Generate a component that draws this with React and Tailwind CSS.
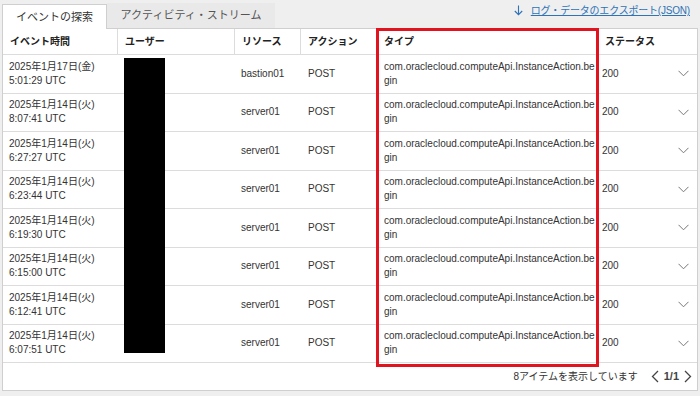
import React from "react";

const rows = [
  ["2025年1月17日(金)", "5:01:29 UTC", "bastion01"],
  ["2025年1月14日(火)", "8:07:41 UTC", "server01"],
  ["2025年1月14日(火)", "6:27:27 UTC", "server01"],
  ["2025年1月14日(火)", "6:23:44 UTC", "server01"],
  ["2025年1月14日(火)", "6:19:30 UTC", "server01"],
  ["2025年1月14日(火)", "6:15:00 UTC", "server01"],
  ["2025年1月14日(火)", "6:12:41 UTC", "server01"],
  ["2025年1月14日(火)", "6:07:51 UTC", "server01"],
];

const cols = "grid grid-cols-[115px_117px_66px_76px_221px_1fr]";

function Chevron() {
  return (
    <svg width="11" height="7" viewBox="0 0 11 7" fill="none" stroke="#777" strokeWidth="1">
      <path d="M0.5 0.8 L5.5 5.8 L10.5 0.8" />
    </svg>
  );
}

export default function App() {
  return (
    <div
      className="w-[700px] h-[396px] bg-[#efefef] overflow-hidden text-[#333] relative"
      style={{ fontFamily: '"Liberation Sans", "Noto Sans CJK JP", sans-serif' }}
    >
      <div className="flex items-end h-[28px] pl-[2px] pr-[10px]">
        <div className="h-[25px] w-[105px] bg-white border border-b-0 border-[#cfcfcf] flex items-center justify-center text-[11px] text-[#333] relative top-px">
          イベントの探索
        </div>
        <div className="h-[25px] w-[168px] bg-[#e9e9e9] flex items-center justify-center text-[11px] text-[#555]">
          アクティビティ・ストリーム
        </div>
        <div className="ml-auto self-start mt-[3px] flex items-center gap-[8px] text-[10px] text-[#2d73b6] underline">
          <svg width="9" height="11" viewBox="0 0 9 11" fill="none" stroke="#2d73b6" strokeWidth="1.1">
            <path d="M4.5 0.5 V9.5 M0.8 6 L4.5 9.7 L8.2 6" />
          </svg>
          <span className="tracking-[-0.2px]">ログ・データのエクスポート(JSON)</span>
        </div>
      </div>

      <div className="mx-[2px] bg-white border border-[#cfcfcf] h-[363px] text-[10px]">
        <div className={`${cols} h-[26px] border-b border-[#dcdcdc] font-bold text-[10px] text-[#222]`}>
          {["イベント時間", "ユーザー", "リソース", "アクション", "タイプ", "ステータス"].map((h, i) => (
            <div
              key={h}
              className={`flex items-center pl-[7px] ${i < 5 ? "border-r border-[#dcdcdc]" : ""}`}
            >
              {h}
            </div>
          ))}
        </div>
        {rows.map((r, i) => (
          <div key={i} className={`${cols} h-[38.5px] border-b border-[#dcdcdc] leading-[14px]`}>
            <div className="flex flex-col justify-center pl-[6px]">
              <span>{r[0]}</span>
              <span>{r[1]}</span>
            </div>
            <div />
            <div className="flex items-center pl-[6px]">{r[2]}</div>
            <div className="flex items-center pl-[7px]">POST</div>
            <div className="flex items-center pl-[7px] pr-[2px] break-all">
              com.oraclecloud.computeApi.InstanceAction.begin
            </div>
            <div className="flex items-center justify-between pl-[4px] pr-[8px]">
              <span>200</span>
              <Chevron />
            </div>
          </div>
        ))}
        <div className="flex items-center justify-end h-[26px] pr-[5px] gap-[13px] text-[10px]">
          <span>8アイテムを表示しています</span>
          <div className="flex items-center gap-[5px] text-[#333]">
            <svg width="8" height="13" viewBox="0 0 8 13" fill="none" stroke="#444" strokeWidth="1.3">
              <path d="M7 1 L1.5 6.5 L7 12" />
            </svg>
            <span className="text-[11px] font-bold text-[#444]">1/1</span>
            <svg width="8" height="13" viewBox="0 0 8 13" fill="none" stroke="#444" strokeWidth="1.3">
              <path d="M1 1 L6.5 6.5 L1 12" />
            </svg>
          </div>
        </div>
      </div>

      <div className="absolute left-[124px] top-[58px] w-[41px] h-[295px] bg-black" />
      <div className="absolute left-[376px] top-[28px] w-[223px] h-[339px] border-[3px] border-[#e0141e]" />
    </div>
  );
}
